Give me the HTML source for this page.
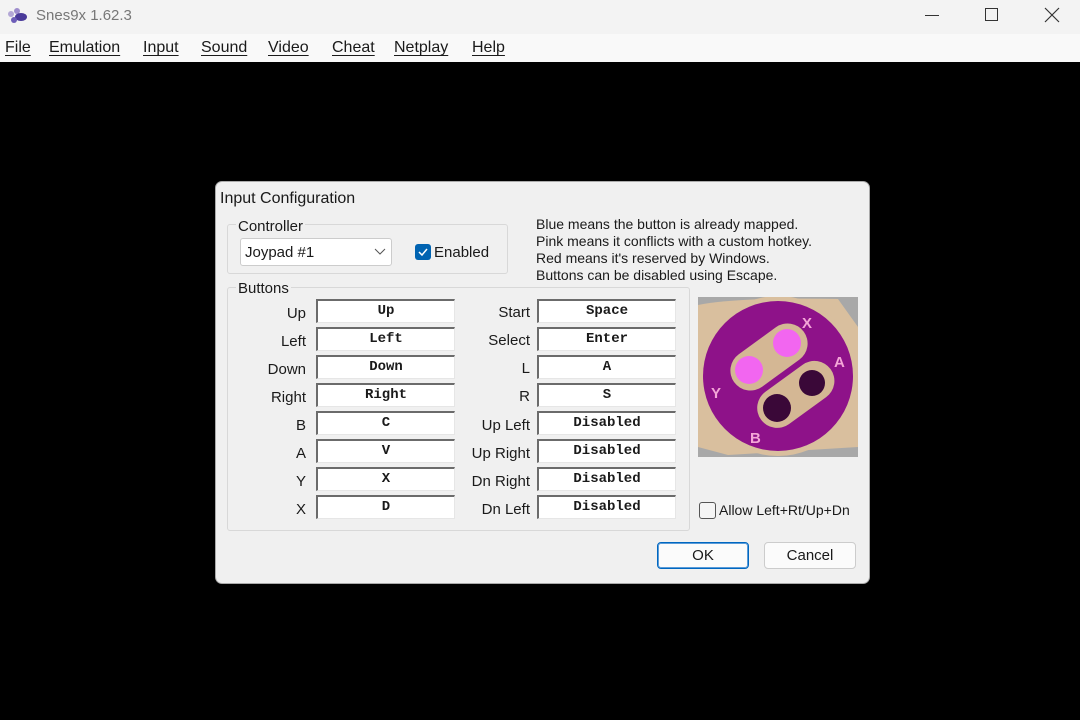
<!DOCTYPE html><html><head><style>
*{margin:0;padding:0;box-sizing:border-box}
body{width:1080px;height:720px;background:#000;font-family:"Liberation Sans",sans-serif;position:relative;overflow:hidden;color:#1a1a1a}
.a{position:absolute}
.tb{left:0;top:0;width:1080px;height:34px;background:#f3f3f3}
.mb{left:0;top:34px;width:1080px;height:28px;background:#f9f9f9;font-size:16px}
.mb span{position:absolute;top:5px;text-decoration:underline;text-decoration-thickness:1px;text-underline-offset:3px}
.dlg{left:215px;top:181px;width:655px;height:403px;background:#f0f0f0;border:1px solid #aaa;border-radius:7px}
.lbl{font-size:15px;position:absolute;text-align:right;width:90px}
.box{position:absolute;width:139px;height:24px;background:#fff;border-top:2px solid #6b6b6b;border-left:2px solid #6b6b6b;border-right:1px solid #e6e6e6;border-bottom:1px solid #e6e6e6;font-family:"Liberation Mono",monospace;font-weight:bold;font-size:14px;text-align:center;line-height:20px}
.grp{position:absolute;border:1px solid #d8d8d8;border-radius:3px}
.gt{position:absolute;background:#f0f0f0;font-size:15px;padding:0 2px}
.btn{position:absolute;width:92px;height:27px;background:#fbfbfb;border:1px solid #ccc;border-radius:4px;font-size:15px;text-align:center;line-height:25px}
</style></head><body>
<div class="a tb">
<svg class="a" style="left:5px;top:7px" width="24" height="18"><circle cx="6" cy="7" r="3" fill="#b3a7d6"/><circle cx="12" cy="4" r="3" fill="#9d8ccc"/><ellipse cx="16" cy="10" rx="6" ry="4" fill="#4a3a99"/><circle cx="9" cy="13" r="3" fill="#6d5db8"/></svg>
<span class="a" style="left:36px;top:7px;font-size:15px;color:#777">Snes9x 1.62.3</span>
<span class="a" style="left:925px;top:15px;width:14px;height:1px;background:#333"></span>
<span class="a" style="left:985px;top:8px;width:13px;height:13px;border:1px solid #333"></span>
<svg class="a" style="left:1044px;top:7px" width="16" height="16"><path d="M1 1L15 15M15 1L1 15" stroke="#333" stroke-width="1.2"/></svg>
</div>
<div class="a mb"><span style="left:5px">File</span><span style="left:49px">Emulation</span><span style="left:143px">Input</span><span style="left:201px">Sound</span><span style="left:268px">Video</span><span style="left:332px">Cheat</span><span style="left:394px">Netplay</span><span style="left:472px">Help</span></div>
<div class="a dlg">
<span class="a" style="left:4px;top:8px;font-size:16px">Input Configuration</span>
<div class="grp" style="left:11px;top:42px;width:281px;height:50px"></div>
<span class="gt" style="left:20px;top:36px">Controller</span>
<div class="a" style="left:24px;top:56px;width:152px;height:28px;background:#fff;border:1px solid #ccc;border-radius:3px;font-size:15px;padding:5px 4px">Joypad #1</div>
<svg class="a" style="left:158px;top:66px" width="12" height="8"><path d="M1 1L6 6L11 1" stroke="#555" fill="none"/></svg>
<div class="a" style="left:199px;top:62px;width:16px;height:16px;background:#0063b1;border-radius:3px"></div>
<svg class="a" style="left:201px;top:64px" width="12" height="12"><path d="M2 6L5 9L10 3" stroke="#fff" stroke-width="1.5" fill="none"/></svg>
<span class="a" style="left:218px;top:62px;font-size:15px">Enabled</span>
<div class="a" style="left:320px;top:34px;font-size:14px;line-height:17px">Blue means the button is already mapped.<br>Pink means it conflicts with a custom hotkey.<br>Red means it's reserved by Windows.<br>Buttons can be disabled using Escape.</div>
<div class="grp" style="left:11px;top:105px;width:463px;height:244px"></div>
<span class="gt" style="left:20px;top:98px">Buttons</span>
<div class="lbl" style="left:0;top:123px">Up</div><div class="box" style="left:100px;top:117px">Up</div>
<div class="lbl" style="left:0;top:151px">Left</div><div class="box" style="left:100px;top:145px">Left</div>
<div class="lbl" style="left:0;top:179px">Down</div><div class="box" style="left:100px;top:173px">Down</div>
<div class="lbl" style="left:0;top:207px">Right</div><div class="box" style="left:100px;top:201px">Right</div>
<div class="lbl" style="left:0;top:235px">B</div><div class="box" style="left:100px;top:229px">C</div>
<div class="lbl" style="left:0;top:263px">A</div><div class="box" style="left:100px;top:257px">V</div>
<div class="lbl" style="left:0;top:291px">Y</div><div class="box" style="left:100px;top:285px">X</div>
<div class="lbl" style="left:0;top:319px">X</div><div class="box" style="left:100px;top:313px">D</div>
<div class="lbl" style="left:224px;top:122px">Start</div><div class="box" style="left:321px;top:117px">Space</div>
<div class="lbl" style="left:224px;top:150px">Select</div><div class="box" style="left:321px;top:145px">Enter</div>
<div class="lbl" style="left:224px;top:178px">L</div><div class="box" style="left:321px;top:173px">A</div>
<div class="lbl" style="left:224px;top:206px">R</div><div class="box" style="left:321px;top:201px">S</div>
<div class="lbl" style="left:224px;top:235px">Up Left</div><div class="box" style="left:321px;top:229px">Disabled</div>
<div class="lbl" style="left:224px;top:263px">Up Right</div><div class="box" style="left:321px;top:257px">Disabled</div>
<div class="lbl" style="left:224px;top:291px">Dn Right</div><div class="box" style="left:321px;top:285px">Disabled</div>
<div class="lbl" style="left:224px;top:319px">Dn Left</div><div class="box" style="left:321px;top:313px">Disabled</div>
<svg class="a" style="left:482px;top:115px" width="160" height="160">
<rect width="160" height="160" fill="#a8a8a8"/>
<path d="M0 8Q40 0 140 2L160 30V150L30 158L0 150Z" fill="#d9bf9e"/>
<circle cx="80" cy="79" r="80" fill="#d9bf9e"/>
<circle cx="80" cy="79" r="75" fill="#8e1289"/>
<rect x="28" y="40" width="86" height="40" rx="20" transform="rotate(-36 71 60)" fill="#d4b794"/>
<rect x="55" y="78" width="86" height="40" rx="20" transform="rotate(-36 97 98)" fill="#d4b794"/>
<circle cx="51" cy="73" r="14" fill="#f266f0"/><circle cx="89" cy="46" r="14" fill="#f266f0"/>
<circle cx="114" cy="86" r="13" fill="#3a0838"/><circle cx="79" cy="111" r="14" fill="#3a0838"/>
<g fill="#f4a6d8" font-size="15" font-weight="bold" font-family="Liberation Sans,sans-serif"><text x="104" y="31">X</text><text x="136" y="70">A</text><text x="13" y="101">Y</text><text x="52" y="146">B</text></g>
</svg>
<div class="a" style="left:483px;top:320px;width:17px;height:17px;border:1px solid #555;border-radius:3px;background:#f5f5f5"></div>
<span class="a" style="left:503px;top:320px;font-size:14px">Allow Left+Rt/Up+Dn</span>
<div class="btn" style="left:441px;top:360px;border:1px solid #0067c0;box-shadow:inset 0 0 0 1px #5a9bd8">OK</div>
<div class="btn" style="left:548px;top:360px">Cancel</div>
</div>
</body></html>
